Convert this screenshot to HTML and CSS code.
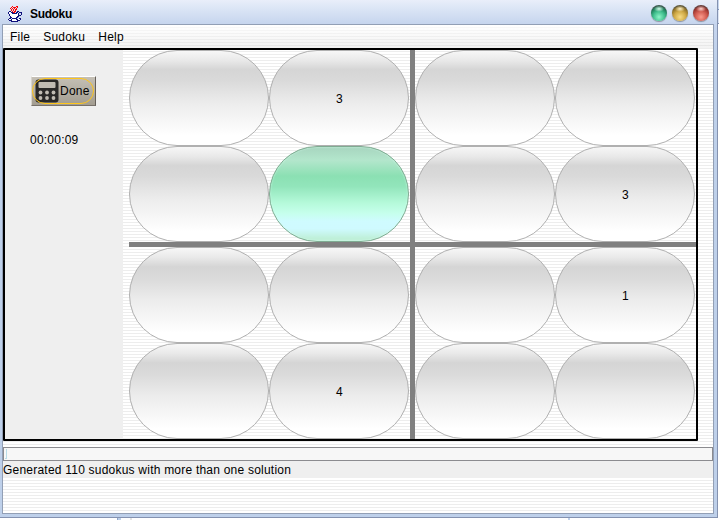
FILE: index.html
```html
<!DOCTYPE html>
<html lang="en">
<head>
<meta charset="utf-8">
<title>Sudoku</title>
<link rel="stylesheet" href="styles.css">
</head>
<body>
<div class="window">
  <header class="titlebar">
    <svg class="java" width="16" height="18" viewBox="0 0 16 18" fill="none" shape-rendering="crispEdges">
      <path stroke="#f00" d="M4 .5h1M8 .5h2M3 1.5h1M5 1.5h3M9 1.5h1M2 2.5h1M4 2.5h1M6 2.5h1M8 2.5h1M3 3.5h1M5 3.5h1M7 3.5h2M3 4.5h1M5 4.5h1M7 4.5h1M4 5.5h1M6 5.5h2M5 6.5h2"/>
      <path stroke="#10107c" d="M1 5.5h2M9 5.5h2M0 6.5h1M3 6.5h2M8 6.5h2M11 6.5h3M0 7.5h1M4 7.5h5M10 7.5h1M13 7.5h1M1 8.5h1M10 8.5h1M13 8.5h1M1 9.5h1M10 9.5h3M2 10.5h1M9 10.5h2M2 11.5h2M8 11.5h2M1 12.5h2M4 12.5h5M11 12.5h2M0 13.5h1M3 13.5h1M8 13.5h2M12 13.5h1M1 14.5h3M9 14.5h3M3 15.5h7"/>
      <path stroke="#fff" d="M1 6.5h2M1 7.5h3M9 7.5h1M2 8.5h8M2 9.5h8M3 10.5h6M4 11.5h4M1 13.5h2M4 13.5h4M10 13.5h2M4 14.5h5"/>
    </svg>
    <h1>Sudoku</h1>
    <div class="controls"><i class="orb green"></i><i class="orb gold"></i><i class="orb red"></i></div>
  </header>
  <main class="content">
    <nav class="menu"><span>File</span><span>Sudoku</span><span>Help</span></nav>
    <section class="board">
      <aside>
        <button class="done">
          <svg width="24" height="24" viewBox="0 0 24 24">
            <rect x=".5" y=".5" width="23" height="23" rx="3" fill="#292827"/>
            <rect x="3.5" y="3" width="17" height="6" rx="1" fill="#c0bbb2"/>
            <g fill="#c0bbb2"><circle cx="5.5" cy="13.5" r="1.9"/><circle cx="12" cy="13.5" r="1.9"/><circle cx="18.5" cy="13.5" r="1.9"/><circle cx="5.5" cy="19" r="1.9"/><circle cx="12" cy="19" r="1.9"/><circle cx="18.5" cy="19" r="1.9"/></g>
          </svg><span>Done</span>
        </button>
        <div class="timer">00:00:09</div>
      </aside>
      <div class="grid">
        <div class="cell c1 r1"></div><div class="cell c2 r1">3</div><div class="cell c3 r1"></div><div class="cell c4 r1"></div>
        <div class="cell c1 r2"></div><div class="cell c2 r2 selected"></div><div class="cell c3 r2"></div><div class="cell c4 r2">3</div>
        <div class="cell c1 r3"></div><div class="cell c2 r3"></div><div class="cell c3 r3"></div><div class="cell c4 r3">1</div>
        <div class="cell c1 r4"></div><div class="cell c2 r4">4</div><div class="cell c3 r4"></div><div class="cell c4 r4"></div>
        <div class="rule vertical"></div><div class="rule horizontal"></div>
      </div>
    </section>
    <div class="progress"><i></i></div>
    <div class="status">Generated 110 sudokus with more than one solution</div>
  </main>
</div>
</body>
</html>
```
FILE: styles.css
```css
* { box-sizing: border-box; }
body {
  margin: 0;
  height: 520px;
  overflow: hidden;
  background:
    linear-gradient(#8ea6ca, #8ea6ca) 117px 518px / 1px 2px no-repeat,
    linear-gradient(#bed0ea, #bed0ea) 118px 518px / 3px 2px no-repeat,
    linear-gradient(#e4e4e4, #e4e4e4) 130px 518px / 2px 2px no-repeat,
    linear-gradient(#bed0ea, #bed0ea) 568px 518px / 2px 2px no-repeat,
    linear-gradient(#c8d7ef 0 9px, #7f95bd 9px 10px, #dde6f5 10px 23px, #8492b0 23px 24px, #fff 24px) 718px 0 / 1px 100% no-repeat,
    #fff;
  font: 12px "Liberation Sans", Arial, sans-serif;
  letter-spacing: .22px;
  color: #000;
}
.window {
  width: 718px;
  height: 518px;
  padding: 0 3px 3px 2px;
  border-right: 1px solid #8492b0;
  border-bottom: 1px solid #8492b0;
  background: linear-gradient(#e9eefa 0, #dce6f6 8px, #c6d5ee 24px, #bed0ea 60px, #bed0ea);
}
.titlebar { display: flex; align-items: flex-start; height: 24px; padding-left: 6px; }
.java { margin-top: 6px; flex: none; }
h1 { margin: 6px 0 0 6px; font-size: 12px; line-height: 16px; font-weight: bold; letter-spacing: -.35px; }
.controls { display: flex; gap: 5px; margin: 5px 5px 0 auto; }
.orb { width: 16px; height: 16px; border-radius: 50%; box-shadow: 0 1px 1px #8b929f; }
.green { background: radial-gradient(ellipse 5px 3px at 50% 24%, #d5fae9, transparent), radial-gradient(circle at 50% 75%, #8df5c8 0, #3fbd8c 40%, #207c59 65%, #3c5c50 75%); }
.gold { background: radial-gradient(ellipse 5px 3px at 50% 24%, #fff3c8, transparent), radial-gradient(circle at 50% 75%, #f7dc86 0, #cfa946 40%, #8f7229 65%, #625a3c 75%); }
.red { background: radial-gradient(ellipse 5px 3px at 50% 24%, #ffd6d0, transparent), radial-gradient(circle at 50% 75%, #fa9b8d 0, #d05b50 40%, #98342f 65%, #693f3c 75%); }
.content {
  height: 490px;
  width: 712px;
  border: 1px solid #929fb5;
  background: repeating-linear-gradient(#fff 0 2px, #ededed 2px 3px);
}
.menu {
  display: flex;
  gap: 13px;
  height: 23px;
  padding: 4px 7px 0;
  line-height: 16px;
  background: linear-gradient(rgba(255,255,255,.85), rgba(235,235,235,.6)), repeating-linear-gradient(#fff 0 2px, #ddd 2px 3px);
}
.board { display: flex; width: 695px; height: 393px; border: 2px solid #000; border-radius: 1px; }
aside { width: 118px; padding: 26px 0 0 25px; background: #efefef; margin-right: 6px; flex: none; }
.done {
  position: relative;
  display: flex;
  align-items: center;
  gap: 1px;
  width: 65px;
  height: 30px;
  margin: 0 0 0 1px;
  padding: 0 0 0 3px;
  border: 1px solid;
  border-color: #fff #65605a #77716a #d8d4cc;
  background: linear-gradient(#c5c0b6, #a39d91);
  font: inherit;
  letter-spacing: .22px;
  color: #000;
}
.done::after { content: ""; position: absolute; inset: 1px 1px 1px 0; border: 1px solid #ffc61a; border-radius: 14px; }
.timer { margin-top: 26px; line-height: 16px; }
.grid {
  display: grid;
  grid-template-columns: 140px 140px 6px 140px 140px;
  grid-template-rows: 96px 96px 5px 96px 96px;
}
.cell {
  display: flex;
  align-items: center;
  justify-content: center;
  padding: 2px 0 0 1px;
  border: 1px solid #b0b0b0;
  border-radius: 48px;
  background: linear-gradient(#f7f7f7 0, #e9e9e9 10%, #d5d5d5 20%, #dadada 32%, #ececec 55%, #f5f5f5 72%, #fff 90%);
}
.selected {
  border-color: #7fab92;
  background: linear-gradient(#a7d5bf 0, #b3e6cc 14%, #8be0b3 31%, #92e5bb 42%, #b4f9d9 59%, #c5ffeb 70%, #cffbff 79%, #cffaff 87%, #bff0d9 97%);
  box-shadow: inset 0 0 2px #d5ffec;
}
.c1 { grid-column: 1; }
.c2 { grid-column: 2; }
.c3 { grid-column: 4; }
.c4 { grid-column: 5; }
.r1 { grid-row: 1; }
.r2 { grid-row: 2; }
.r3 { grid-row: 4; }
.r4 { grid-row: 5; }
.rule { background: #808080; }
.vertical { grid-column: 3; grid-row: 1 / -1; margin-left: 1px; }
.horizontal { grid-row: 3; grid-column: 1 / -1; margin-right: -1px; }
.progress { height: 14px; margin-top: 6px; padding: 1px; border: 1px solid #8b8b8f; background: #f7f7f7; }
.progress i { display: block; width: 2px; height: 10px; border-right: 1px solid #b9dce8; border-bottom: 1px solid #b9dce8; }
.status { height: 17px; line-height: 19px; background: #efefef; }
```
